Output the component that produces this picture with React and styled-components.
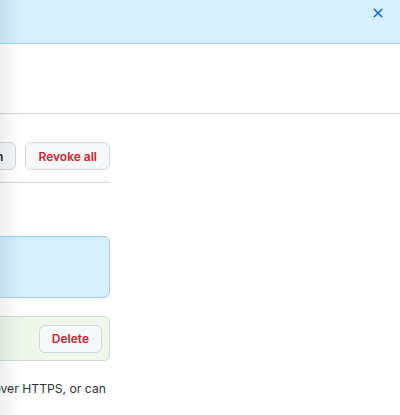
import styled, { createGlobalStyle } from "styled-components";

const Global = createGlobalStyle`
  body {
    margin: 0;
    background: #fff;
    font-family: Inter, "Liberation Sans", sans-serif;
    color: #1f2328;
  }
`;

const Page = styled.div`
  position: relative;
  width: 400px;
  height: 415px;
  overflow: hidden;
  background: #fff;
`;

const EdgeShadow = styled.div`
  position: absolute;
  left: 0;
  top: 0;
  bottom: 0;
  width: 22px;
  background: linear-gradient(to right, rgba(31, 35, 40, 0.07), rgba(31, 35, 40, 0));
  pointer-events: none;
`;

const Flash = styled.div`
  box-sizing: border-box;
  height: 44px;
  background: #d5efff;
  border-bottom: 1px solid #a2cff5;
  display: flex;
  justify-content: flex-end;
  align-items: flex-start;
  padding: 5px 14px 0 0;
`;

const CloseButton = styled.button`
  all: unset;
  width: 16px;
  height: 16px;
  color: #0969da;
  cursor: pointer;
  display: flex;
  svg {
    fill: currentColor;
  }
`;

const Header = styled.div`
  height: 69px;
  border-bottom: 1px solid #d0d7de;
`;

const Column = styled.div`
  width: 400px;
  margin-left: -290px;
  padding-top: 28px;
`;

const ButtonRow = styled.div`
  display: flex;
  justify-content: flex-end;
  gap: 9px;
`;

const Button = styled.button`
  all: unset;
  box-sizing: border-box;
  height: 28px;
  padding: 0 12px;
  display: inline-flex;
  align-items: center;
  font-family: Inter, "Liberation Sans", sans-serif;
  font-size: 12px;
  font-weight: 600;
  color: ${(p) => (p.$danger ? "#cf222e" : "#1f2328")};
  background: #f6f8fa;
  border: 1px solid #d0d7de;
  border-radius: 6px;
  cursor: pointer;
  white-space: nowrap;
`;

const Divider = styled.hr`
  margin: 12px 0 0;
  border: 0;
  border-top: 1px solid #d0d7de;
`;

const Box = styled.div`
  box-sizing: border-box;
  height: ${(p) => p.$height}px;
  margin-top: ${(p) => p.$gap}px;
  border-radius: 6px;
  border: 1px solid ${(p) => (p.$tone === "info" ? "#9fcdf5" : "#d0d7de")};
  background: ${(p) => (p.$tone === "info" ? "#d5efff" : "#eff6ea")};
  display: flex;
  align-items: center;
  justify-content: flex-end;
  padding-right: 7px;
`;

const Note = styled.p`
  margin: 19px 0 0;
  padding-right: 4px;
  font-size: 12.2px;
  line-height: 18px;
  color: #2d3239;
  text-align: right;
  white-space: nowrap;
`;

const App = () => (
  <>
    <Global />
    <Page>
      <Flash>
        <CloseButton aria-label="Dismiss">
          <svg width="16" height="16" viewBox="0 0 16 16">
            <path d="M3.72 3.72a.75.75 0 0 1 1.06 0L8 6.94l3.22-3.22a.749.749 0 0 1 1.275.326.749.749 0 0 1-.215.734L9.06 8l3.22 3.22a.749.749 0 0 1-.326 1.275.749.749 0 0 1-.734-.215L8 9.06l-3.22 3.22a.751.751 0 0 1-1.042-.018.751.751 0 0 1-.018-1.042L6.94 8 3.72 4.78a.75.75 0 0 1 0-1.06Z" />
          </svg>
        </CloseButton>
      </Flash>
      <Header />
      <Column>
        <ButtonRow>
          <Button>Transfer ownership</Button>
          <Button>Regenerate token</Button>
          <Button $danger>Revoke all</Button>
        </ButtonRow>
        <Divider />
        <Box $tone="info" $height={62} $gap={53} />
        <Box $tone="success" $height={45} $gap={18}>
          <Button $danger>Delete</Button>
        </Box>
        <Note>Tokens can be used to access the API over HTTPS, or can</Note>
      </Column>
      <EdgeShadow />
    </Page>
  </>
);

export default App;
